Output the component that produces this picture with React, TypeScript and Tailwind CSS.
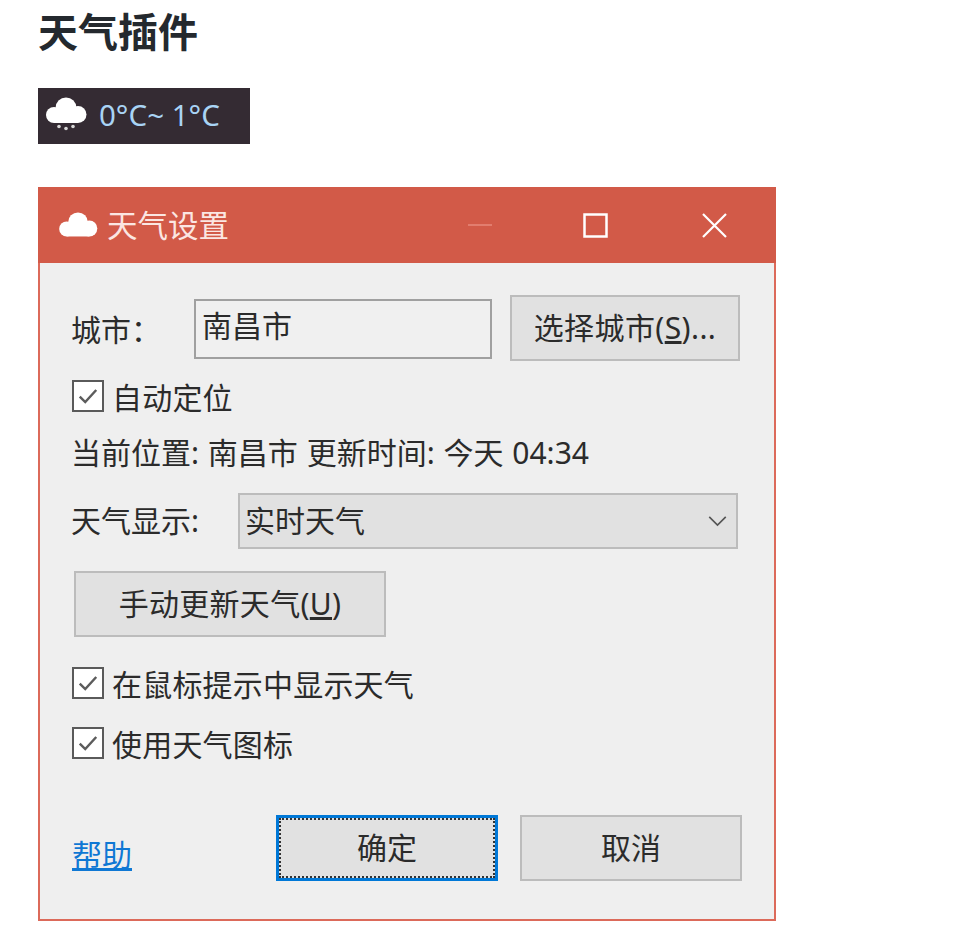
const FONT = "font-['Noto_Sans','Noto_Sans_CJK_SC',sans-serif]"

function Cloud({ className, snow }: { className: string; snow?: boolean }) {
  return (
    <svg viewBox="0 0 42 34" className={className} fill="#fff">
      <circle cx="21" cy="11" r="10.500" />
      <circle cx="9" cy="18" r="8" />
      <circle cx="33" cy="17.500" r="8.500" />
      <rect x="9" y="14" width="24" height="12" />
      {snow && (
        <g fill="#d8d8d8">
          <circle cx="14" cy="29.500" r="1.800" />
          <circle cx="21" cy="31.500" r="1.800" />
          <circle cx="28" cy="29.500" r="1.800" />
        </g>
      )}
    </svg>
  )
}

function Check({ label, className }: { label: string; className: string }) {
  return (
    <div className={`flex items-center gap-[8px] ${className}`}>
      <div className="flex h-[32px] w-[32px] items-center justify-center border-2 border-[#5a5a5a] bg-white">
        <svg viewBox="0 0 20 20" className="h-[22px] w-[22px]" fill="none" stroke="#5c5c5c" strokeWidth="2.200">
          <path d="M2.500 10.500L7.500 15.500L17.500 4.500" />
        </svg>
      </div>
      <span className="pt-[4px] leading-[36px] tracking-[0.200px]">{label}</span>
    </div>
  )
}

function Btn({ children, className }: { children: React.ReactNode; className: string }) {
  return (
    <div className={`flex items-center justify-center border-2 border-[#bcbcbc] bg-[#e1e1e1] ${className}`}>
      {children}
    </div>
  )
}

export default function App() {
  return (
    <div className={`min-h-[939px] bg-white pl-[38px] pt-[10px] ${FONT}`}>
      <h1 className="text-[40px] font-bold leading-[44px] text-[#24292e]">天气插件</h1>

      <div className="mt-[34px] flex h-[56px] w-[212px] items-center bg-[#342b33] pb-[4px] pl-[7px]">
        <Cloud snow className="h-[34px] w-[42px]" />
        <span className="ml-[12px] pt-[2px] text-[29.500px] leading-none text-[#a9d4f5]">0°C~ 1°C</span>
      </div>

      <div className="mt-[43px] h-[734px] w-[738px] border-2 border-[#dc6a5a] bg-[#efefef] text-[30px] leading-[40px] text-[#2b2b2b]">
        <div className="-mx-[2px] -mt-[2px] flex h-[76px] items-center bg-[#d25a48] pl-[20px] pr-[49px]">
          <Cloud className="mt-[6px] h-[32px] w-[40px]" />
          <span className="ml-[9px] text-[30.500px] text-[#fbe6e2]">天气设置</span>
          <svg viewBox="0 0 24 2" className="ml-auto h-[2px] w-[24px]"><path d="M0 1H24" stroke="#e27d6e" strokeWidth="2" /></svg>
          <svg viewBox="0 0 25 25" className="ml-[91px] h-[25px] w-[25px]" fill="none"><path d="M1.500 1.500H23.500V23.500H1.500Z" stroke="#fff" strokeWidth="2.500" /></svg>
          <svg viewBox="0 0 25 25" className="ml-[94px] h-[25px] w-[25px]" fill="none"><path d="M1 1L24 24M24 1L1 24" stroke="#fff" strokeWidth="2.200" /></svg>
        </div>

        <div className="pl-[32px] pr-[30px]">
          <div className="mt-[32px] flex h-[66px] items-center">
            <span className="-ml-px w-[123px] pt-[4px]">城市：</span>
            <div className="mt-[2px] flex h-[60px] w-[298px] items-center border-2 border-[#a0a0a0] bg-[#f0f0f0] pb-[6px] pl-[6px]">南昌市</div>
            <Btn className="ml-[18px] h-[66px] w-[230px]">
              <span className="tracking-[0.400px]">选择城市(<u>S</u>)...</span>
            </Btn>
          </div>

          <Check label="自动定位" className="mt-[15px]" />
          <div className="-ml-px mt-[17px] [word-spacing:1px]">当前位置: 南昌市 更新时间: 今天 04:34</div>

          <div className="mt-[20px] flex h-[56px] items-center">
            <span className="-ml-px w-[167px]">天气显示:</span>
            <div className="flex h-[56px] w-[500px] items-center justify-between border-2 border-[#bcbcbc] bg-[#e1e1e1] pl-[5px] pr-[9px]">
              <span>实时天气</span>
              <svg viewBox="0 0 20 12" className="h-[11px] w-[19px]" fill="none" stroke="#555" strokeWidth="1.800"><path d="M1 1L10 10L19 1" /></svg>
            </div>
          </div>

          <Btn className="ml-[2px] mt-[22px] h-[66px] w-[312px]">
            <span className="tracking-[0.300px]">手动更新天气(<u>U</u>)</span>
          </Btn>

          <Check label="在鼠标提示中显示天气" className="mt-[26px]" />
          <Check label="使用天气图标" className="mt-[20px]" />

          <div className="mt-[52px] flex h-[66px] items-center">
            <a className="mt-[14px] w-[204px] text-[#0f78d4] underline">帮助</a>
            <div className="flex h-[66px] w-[222px] shrink-0 items-center justify-center border-[3px] border-[#0078d7] bg-[#e1e1e1] outline-2 -outline-offset-[5px] outline-dotted outline-[#333]">确定</div>
            <Btn className="ml-[22px] h-[66px] w-[222px] shrink-0">取消</Btn>
          </div>
        </div>
      </div>
    </div>
  )
}
